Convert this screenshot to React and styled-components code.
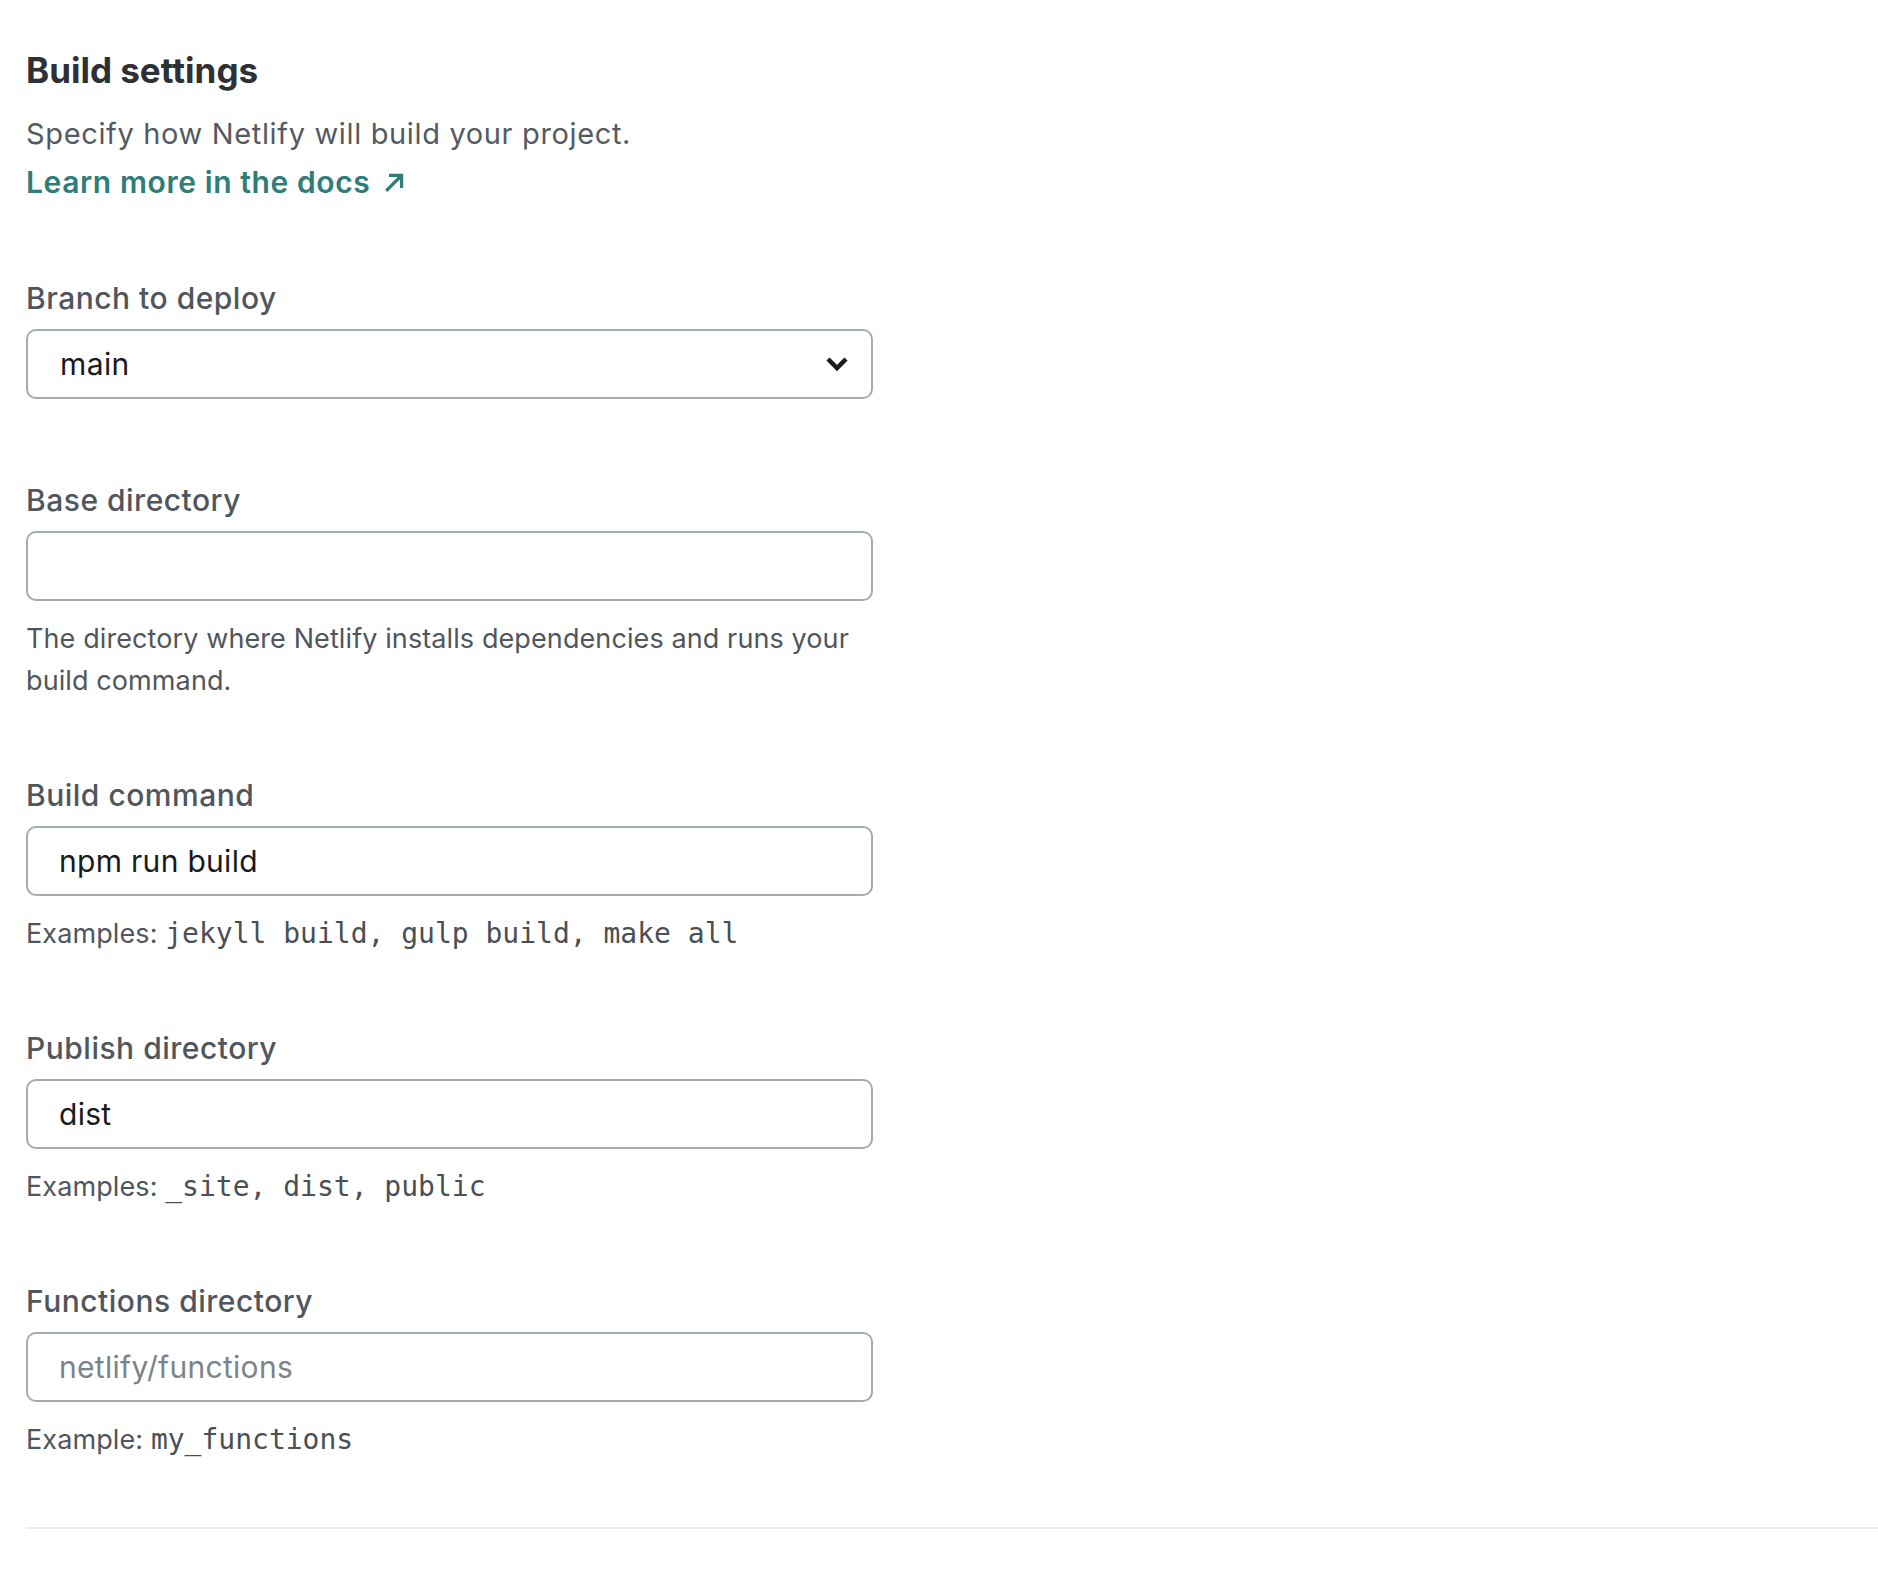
import styled, { createGlobalStyle } from "styled-components";

const GlobalStyle = createGlobalStyle`
  html, body {
    margin: 0;
    padding: 0;
    background-color: #ffffff;
  }
  body {
    font-family: Inter, "Noto Sans", "Liberation Sans", sans-serif;
    color: #545a61;
    -webkit-font-smoothing: antialiased;
  }
  * {
    box-sizing: border-box;
  }
`;

const StyledPage = styled.div`
  padding: 50px 0 40px 26px;
  display: flex;
  flex-direction: column;
`;

const SectionHeader = styled.header`
  display: flex;
  flex-direction: column;
  align-items: flex-start;
`;

const Heading = styled.h2`
  margin: 0;
  font-size: 35px;
  line-height: 40px;
  font-weight: 700;
  color: #2d3035;
`;

const Description = styled.p`
  margin: 23px 0 0 0;
  font-size: 29px;
  line-height: 42px;
  letter-spacing: 0.65px;
  color: #545a61;
`;

const DocsLink = styled.a`
  margin-top: 6px;
  display: inline-flex;
  align-items: center;
  gap: 13px;
  font-size: 30px;
  line-height: 42px;
  font-weight: 600;
  letter-spacing: 0.6px;
  color: #2e7d78;
  text-decoration: none;
  & svg {
    width: 24px;
    height: 24px;
  }
`;

const Form = styled.form`
  margin-top: 74px;
  width: 847px;
  display: flex;
  flex-direction: column;
  gap: 72px;
`;

const Field = styled.div`
  display: flex;
  flex-direction: column;
`;

const Label = styled.label`
  font-size: 30px;
  line-height: 42px;
  font-weight: 500;
  letter-spacing: 0.5px;
  color: #50565c;
  margin-bottom: 10px;
`;

const SelectWrap = styled.div`
  position: relative;
  margin-bottom: 8px;
  & svg {
    position: absolute;
    right: 24px;
    top: 50%;
    transform: translateY(-50%);
    pointer-events: none;
  }
`;

const Select = styled.select`
  appearance: none;
  width: 100%;
  height: 70px;
  padding: 0 60px 0 32px;
  border: 2px solid #a3abb3;
  border-radius: 10px;
  background-color: #ffffff;
  font-family: inherit;
  font-size: 30px;
  letter-spacing: 0.4px;
  color: #181a1c;
  outline: none;
`;

const Input = styled.input`
  width: 100%;
  height: 70px;
  padding: 0 31px;
  border: 2px solid #a3abb3;
  border-radius: 10px;
  background-color: #ffffff;
  font-family: inherit;
  font-size: 30px;
  letter-spacing: 0.3px;
  color: #181a1c;
  outline: none;
  &::placeholder {
    color: #7c838a;
  }
`;

const Help = styled.p`
  margin: 17px 0 0 0;
  font-size: 27px;
  line-height: 42px;
  letter-spacing: 0.1px;
  color: #50565c;
  & code {
    font-family: "DejaVu Sans Mono", "Liberation Mono", monospace;
    font-size: 28px;
    letter-spacing: 0;
    color: #4a4f55;
  }
`;

const Divider = styled.hr`
  margin: 66px 0 0 0;
  border: none;
  height: 2px;
  background-color: #ebebeb;
`;

function ArrowIcon() {
  return (
    <svg viewBox="0 0 22 22" fill="none" stroke="#2e7d78" strokeWidth="3" strokeLinecap="square">
      <path d="M4 18 L16 6" />
      <path d="M7 5 H17 V15" />
    </svg>
  );
}

function ChevronIcon() {
  return (
    <svg width="24" height="16" viewBox="0 0 24 16" fill="none" stroke="#1a1c1f" strokeWidth="4.5" strokeLinejoin="miter">
      <path d="M3 3 L12 12 L21 3" />
    </svg>
  );
}

const fields = [
  {
    id: "base",
    label: "Base directory",
    value: "",
    help: <>The directory where Netlify installs dependencies and runs your build command.</>,
  },
  {
    id: "command",
    label: "Build command",
    value: "npm run build",
    help: (
      <>
        Examples: <code>jekyll build, gulp build, make all</code>
      </>
    ),
  },
  {
    id: "publish",
    label: "Publish directory",
    value: "dist",
    help: (
      <>
        Examples: <code>_site, dist, public</code>
      </>
    ),
  },
  {
    id: "functions",
    label: "Functions directory",
    value: "",
    placeholder: "netlify/functions",
    help: (
      <>
        Example: <code>my_functions</code>
      </>
    ),
  },
];

function App() {
  return (
    <>
      <GlobalStyle />
      <StyledPage>
        <SectionHeader>
          <Heading>Build settings</Heading>
          <Description>Specify how Netlify will build your project.</Description>
          <DocsLink href="#">
            Learn more in the docs
            <ArrowIcon />
          </DocsLink>
        </SectionHeader>

        <Form onSubmit={(e) => e.preventDefault()}>
          <Field>
            <Label htmlFor="branch">Branch to deploy</Label>
            <SelectWrap>
              <Select id="branch" defaultValue="main">
                <option value="main">main</option>
              </Select>
              <ChevronIcon />
            </SelectWrap>
          </Field>

          {fields.map((field) => (
            <Field key={field.id}>
              <Label htmlFor={field.id}>{field.label}</Label>
              <Input
                id={field.id}
                defaultValue={field.value}
                placeholder={field.placeholder}
              />
              <Help>{field.help}</Help>
            </Field>
          ))}
        </Form>

        <Divider />
      </StyledPage>
    </>
  );
}

export default App;
